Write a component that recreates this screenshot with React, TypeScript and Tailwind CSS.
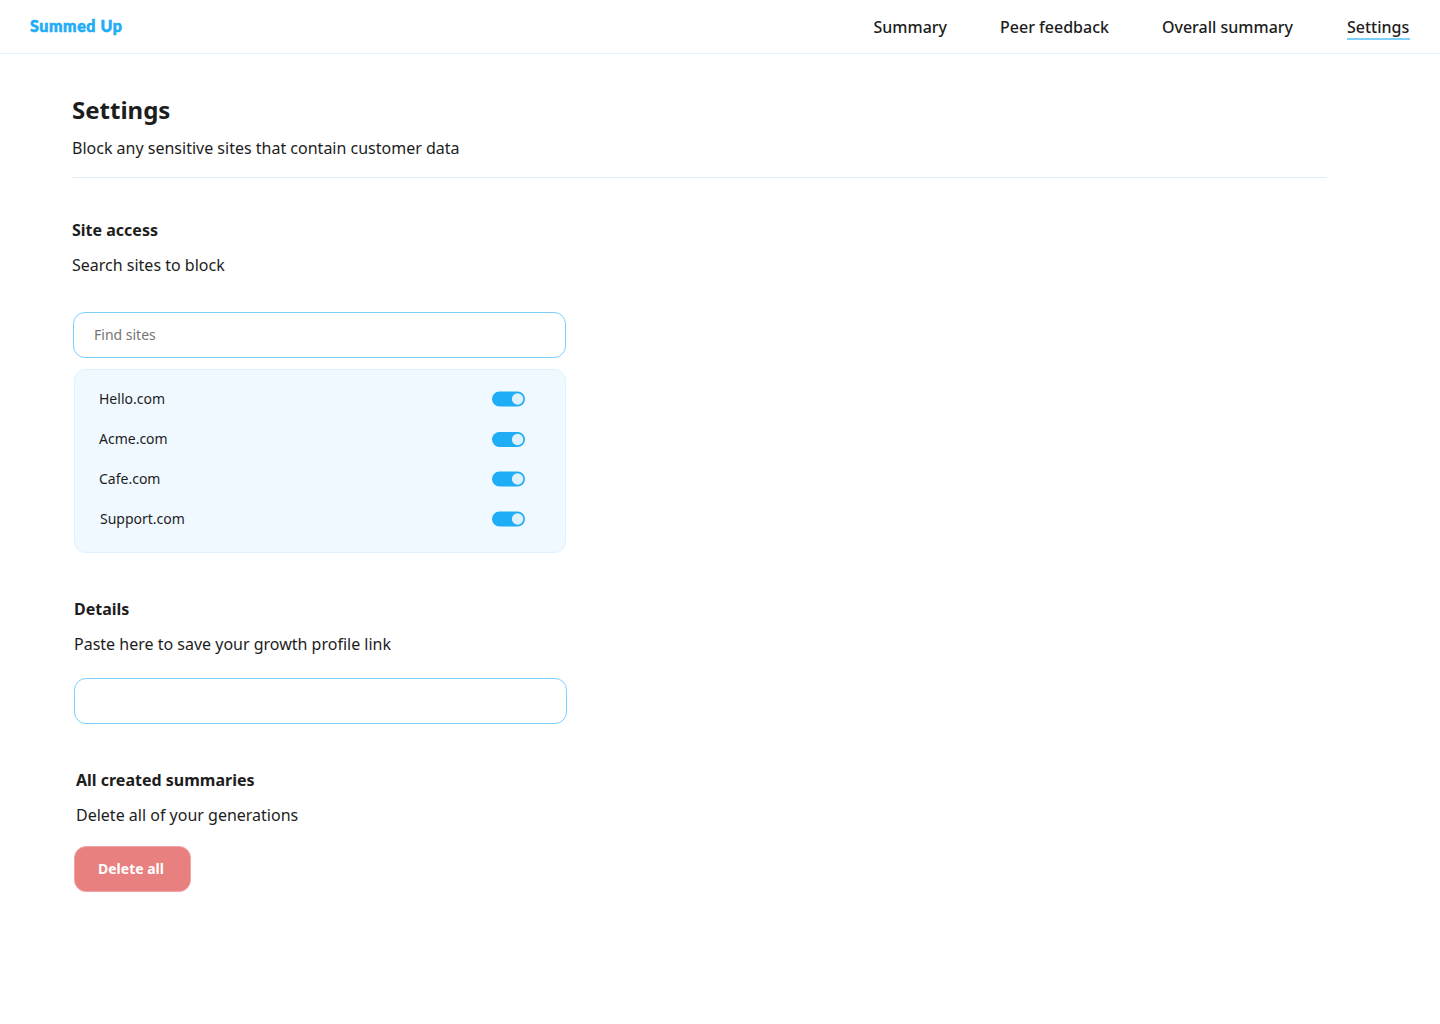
const sites = [
  { name: 'Hello.com', row: 'ml-6', toggle: 'mb-px', offset: 0 },
  { name: 'Acme.com', row: 'ml-6', toggle: 'mb-0', offset: 0.5 },
  { name: 'Cafe.com', row: 'ml-6', toggle: 'mb-px', offset: 0 },
  { name: 'Support.com', row: 'ml-[25px]', toggle: 'mb-px', offset: 0 },
];

const links = ['Summary', 'Peer feedback', 'Overall summary'];

function Toggle({ className, offset }: { className: string; offset: number }) {
  return (
    <svg className={className} width="33" height="16" viewBox="0 0 33 16" role="img" aria-label="Enabled">
      <rect x="0" y={0.6 + offset} width="33" height="14.8" rx="7.4" fill="#1fadf5" />
      <circle cx="25.6" cy={8 + offset} r="5.7" fill="#dff1fd" />
    </svg>
  );
}

export default function App() {
  return (
    <div className="h-[1024px] bg-white font-['Noto_Sans',sans-serif] text-base leading-6 text-[#1d1d1d]">
      <header className="flex h-[54px] items-center justify-between border-b border-[#e1f1fd] px-[30px]">
        <div className="pb-0.5 font-['Lato',sans-serif] text-[16px] font-black tracking-[0.6px] text-[#1fadf5] [-webkit-text-stroke:0.6px_#1fadf5]">
          Summed Up
        </div>
        <nav className="flex gap-[53px] pt-px font-medium">
          {links.map((l) => (
            <a key={l}>{l}</a>
          ))}
          <a className="ml-px h-[25px] w-[63px] border-b-2 border-[#7bd0ff]">Settings</a>
        </nav>
      </header>
      <main className="pl-[72px]">
        <div className="h-[124px] w-[1255px] border-b border-[#e3edf6] pt-10">
          <h1 className="text-2xl leading-8 font-bold">Settings</h1>
          <p className="mt-[10px]">Block any sensitive sites that contain customer data</p>
        </div>
        <section className="pt-10">
          <h2 className="font-bold">Site access</h2>
          <p className="mt-[11px]">Search sites to block</p>
          <input
            placeholder="Find sites"
            className="mt-[35px] ml-px block h-[46px] w-[493px] rounded-[12px] border border-[#7bd0ff] px-5 pb-0.5 text-sm placeholder:text-[#757575]"
          />
          <div className="mt-[11px] ml-[2px] h-[184px] w-[492px] rounded-[12px] border border-[#def1fd] bg-[#f0f9ff] pt-[9px] pr-10">
            {sites.map((s) => (
              <div key={s.name} className="flex h-10 items-center justify-between text-sm">
                <span className={s.row}>{s.name}</span>
                <Toggle className={s.toggle} offset={s.offset} />
              </div>
            ))}
          </div>
        </section>
        <section className="ml-[2px] pt-11">
          <h2 className="font-bold">Details</h2>
          <p className="mt-[11px]">Paste here to save your growth profile link</p>
          <input className="mt-[22px] block h-[46px] w-[493px] rounded-[12px] border border-[#7bd0ff] px-5 text-sm" />
        </section>
        <section className="ml-[2px] pt-11">
          <h2 className="ml-[2px] font-bold">All created summaries</h2>
          <p className="mt-[11px] ml-[2px]">Delete all of your generations</p>
          <button className="mt-[19px] h-[46px] w-[117px] rounded-[12px] border border-[#f0a5a5] bg-[#e88080] pr-[3px] text-sm font-bold text-white">
            Delete all
          </button>
        </section>
      </main>
    </div>
  );
}
